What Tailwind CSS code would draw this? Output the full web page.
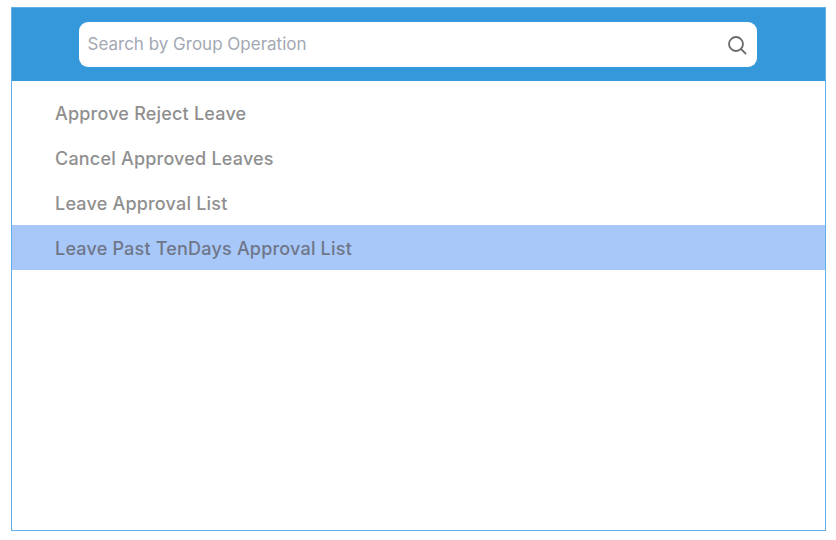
<!DOCTYPE html>
<html>
<head>
<meta charset="utf-8">
<script src="https://cdn.jsdelivr.net/npm/@tailwindcss/browser@4"></script>
</head>
<body class="bg-white font-['Inter',sans-serif]">
<div class="w-[836px] h-[540px] pt-[7px] pl-[11px] pr-[10px] pb-[9px]">
  <div class="h-full border border-[#62b0ea] flex flex-col">
    <div class="h-[73px] bg-[#3498db] flex justify-center pt-[14px] pr-[2px] shrink-0">
      <div class="w-[678px] h-[45px] bg-white rounded-[9px] flex items-center justify-between pl-[9px] pr-[10px]">
        <span class="text-[17px] text-[#a3a8b3]">Search by Group Operation</span>
        <svg class="w-[20px] h-[20px]" viewBox="0 0 20 20" fill="none" stroke="#6b6b6b" stroke-width="1.8" stroke-linecap="round"><circle cx="9" cy="9" r="7"/><path d="M14 14l4.6 4.6"/></svg>
      </div>
    </div>
    <ul class="pt-[9px] text-[18px] tracking-[0.2px] text-[#8f8f8f] font-[450]">
      <li class="h-[45px] flex items-center pl-[43px] pt-[2px]">Approve Reject Leave</li>
      <li class="h-[45px] flex items-center pl-[43px] pt-[2px]">Cancel Approved Leaves</li>
      <li class="h-[45px] flex items-center pl-[43px] pt-[2px]">Leave Approval List</li>
      <li class="h-[45px] flex items-center pl-[43px] pt-[2px] bg-[#a8c8fa] text-[#6f7688]">Leave Past TenDays Approval List</li>
    </ul>
  </div>
</div>
</body>
</html>
